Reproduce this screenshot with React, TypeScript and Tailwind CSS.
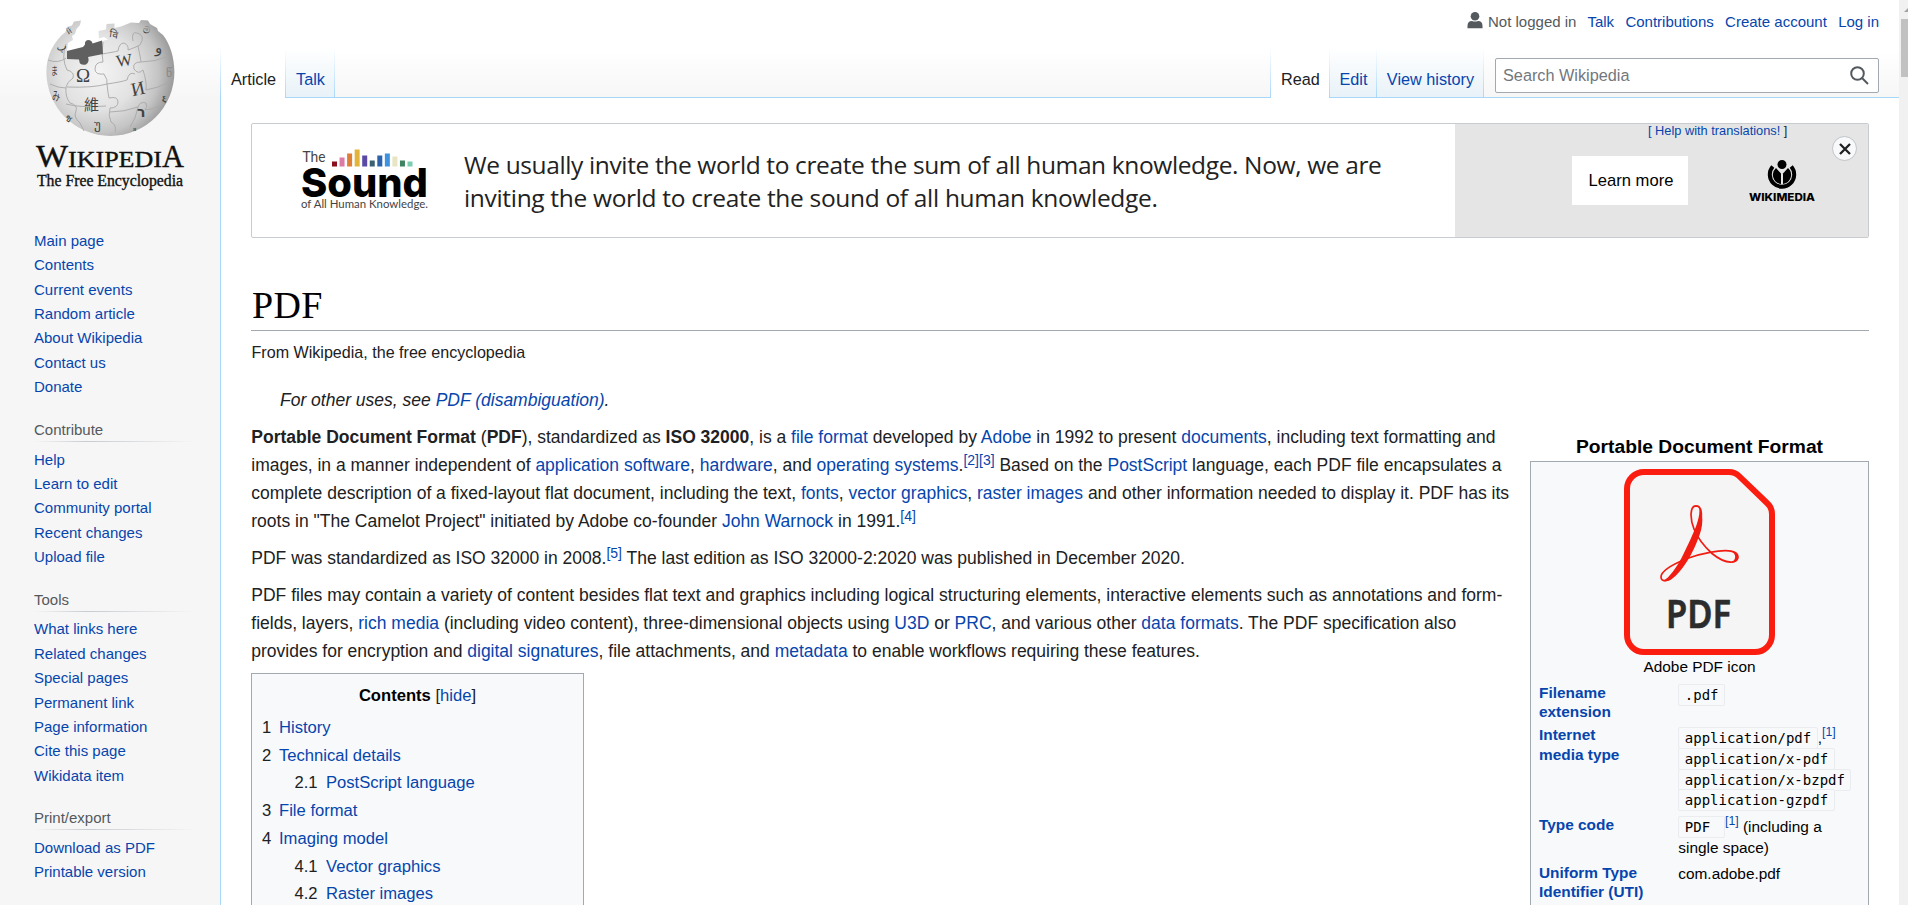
import type { ReactNode } from "react";

const A = ({ children }: { children: ReactNode }) => (
  <a href="#" className="text-[#0645ad]">{children}</a>
);

const Ref = ({ children }: { children: ReactNode }) => (
  <sup className="relative top-[-6px] align-baseline text-[14px] leading-none"><A>{children}</A></sup>
);

const portals = [
  { title: "Contribute", items: ["Help", "Learn to edit", "Community portal", "Recent changes", "Upload file"] },
  { title: "Tools", items: ["What links here", "Related changes", "Special pages", "Permanent link", "Page information", "Cite this page", "Wikidata item"] },
  { title: "Print/export", items: ["Download as PDF", "Printable version"] },
];

const mainLinks = ["Main page", "Contents", "Current events", "Random article", "About Wikipedia", "Contact us", "Donate"];

const contents = [
  { n: "1", t: "History", sub: false },
  { n: "2", t: "Technical details", sub: false },
  { n: "2.1", t: "PostScript language", sub: true },
  { n: "3", t: "File format", sub: false },
  { n: "4", t: "Imaging model", sub: false },
  { n: "4.1", t: "Vector graphics", sub: true },
  { n: "4.2", t: "Raster images", sub: true },
];

const bars: [number, string][] = [
  [5, "#8a0f1e"], [9, "#dc7ba6"], [13, "#df7f35"], [17, "#e2b53a"], [11, "#5a4aa5"], [6, "#3c6073"],
  [11, "#2b62ad"], [13, "#3e93e0"], [10, "#e8e5c4"], [6, "#3f8361"], [5, "#7ccdb0"],
];

function WikipediaLogo() {
  return (
    <svg width="220" height="200" viewBox="0 0 220 200" className="block">
      <defs>
        <radialGradient id="globe" gradientUnits="userSpaceOnUse" cx="98" cy="72" r="84">
          <stop offset="0" stopColor="#f4f4f4" />
          <stop offset="0.45" stopColor="#e2e2e2" />
          <stop offset="0.72" stopColor="#c4c4c4" />
          <stop offset="1" stopColor="#858585" />
        </radialGradient>
      </defs>
      <path
        d="M46.400 72 C46.500 55 54 41 65.500 32 L67 27 L72 25.500 L74 21.500 L81 20.500 L80 25 L76.500 29 L75 34 L72 36 L73 40 L68 43 L67 51 L84 47 L102 41 L108 39.500 L104 37 L99 38.500 L98.500 31 L106 29.500 L106.500 24 L114.500 23.500 L114.500 28 L121 26.500 L131 22.500 L139 23 L141 20 L148 20.500 L150 24 L157 28 L158 31 L163 35 C170 44 174.300 57 174.400 72 A64 64 0 0 1 46.400 72 Z"
        fill="url(#globe)"
      />
      <g fill="none" stroke="#a8a8a8" strokeWidth="0.900">
        <path d="M48 60 q10 4 18 -2 M66 44 q-5 14 1 26 q8 2 6 8 q-6 4 -7 9 q-1 10 4 16 q8 2 6 8 q-3 6 4 12 l4 8" />
        <path d="M103 42 q-2 12 0 20 q-8 0 -8 7 q0 6 9 5 q4 6 3 10 q-14 4 -40 3 M107 84 q1 10 2 14 q9 -2 9 4 q0 6 -8 6 q-2 8 1 14 q6 3 4 10" />
        <path d="M102 54 q12 -2 16 -3 q1 -8 6 -8 q5 2 4 7 q6 -2 12 -5 q6 -10 -3 -12 q-6 -2 -4 8 M138 46 q3 14 3 16 q-9 0 -7 7 q4 6 9 1 q4 12 3 20" />
        <path d="M107 84 q14 -2 20 -4 q2 -9 8 -6 M141 62 q14 0 28 -6 M146 90 q12 -2 24 -8 M110 112 q14 0 28 -5 q2 -6 8 -4 q2 4 -1 7 q8 0 18 -6 M66 104 q14 4 40 2 M50 84 q8 4 16 4 M138 107 q-2 12 -8 20" />
      </g>
      <path d="M67 51 L83 47 L85 44.500 Q84.500 40.500 88 40 Q92 40 92.500 43.500 L102 40.500 L103 54 L88 57 Q90 62 86 64.500 Q80 65.500 79.500 62 L79 59.500 L67 59 Z" fill="#606060" />
      <g fill="#424242" fontFamily="'Liberation Serif', serif">
        <text x="76" y="82" fontSize="19">Ω</text>
        <text x="116" y="66" fontSize="17" transform="rotate(-8 124 60)">W</text>
        <text x="131" y="95" fontSize="19" transform="rotate(-12 138 88)">И</text>
        <text x="84" y="110" fontSize="15" fontFamily="'Noto Sans CJK TC', sans-serif">維</text>
        <text x="137" y="117" fontSize="14" fontWeight="bold" fontFamily="'DejaVu Sans', sans-serif">ר</text>
        <text x="110" y="38" fontSize="10" transform="rotate(8 114 34)">वि</text>
        <text x="155" y="53" fontSize="15" fontFamily="'DejaVu Sans', sans-serif">و</text>
        <text x="143" y="34" fontSize="10" transform="rotate(20 147 31)">ම</text>
        <text x="56" y="50" fontSize="11" transform="rotate(-10 60 46)">پ</text>
        <text x="51" y="75" fontSize="11" fontFamily="'Noto Sans CJK JP', sans-serif" textLength="7" lengthAdjust="spacingAndGlyphs">ま</text>
        <text x="52" y="101" fontSize="12" fontFamily="'Noto Sans CJK JP', sans-serif" textLength="8" lengthAdjust="spacingAndGlyphs">み</text>
        <text x="94" y="129" fontSize="13">უ</text>
        <text x="66" y="122" fontSize="10" transform="rotate(35 70 118)">ช</text>
        <text x="166" y="77" fontSize="12" fill="#888">წ</text>
        <text x="162" y="102" fontSize="9" fontWeight="bold">ξ</text>
        <text x="66" y="34" fontSize="9" transform="rotate(-30 68 30)">й</text>
        <text x="133" y="131" fontSize="7">я</text>
      </g>
      <g fill="#111" fontFamily="'Liberation Serif', serif" stroke="#111" strokeWidth="0.350">
        <text x="36" y="167" fontSize="31" textLength="32" lengthAdjust="spacingAndGlyphs">W</text>
        <text x="68" y="167" fontSize="24" textLength="94" lengthAdjust="spacingAndGlyphs">IKIPEDI</text>
        <text x="162" y="167" fontSize="31" textLength="22" lengthAdjust="spacingAndGlyphs">A</text>
        <text x="37" y="185.500" fontSize="16" textLength="146" lengthAdjust="spacingAndGlyphs">The Free Encyclopedia</text>
      </g>
    </svg>
  );
}

function SoundLogo() {
  return (
    <svg width="130" height="64" viewBox="0 0 130 64" className="block">
      <text x="1.500" y="13.500" fontFamily="Lato, sans-serif" fontWeight="400" fontSize="15" fill="#444" textLength="23" lengthAdjust="spacingAndGlyphs">The</text>
      {bars.map(([h, c], i) => (
        <rect key={c} x={31 + i * 7.55} y={18.5 - h} width="5" height={h} fill={c} />
      ))}
      <text x="0" y="49" fontFamily="Inter, sans-serif" fontWeight="800" fontSize="40" fill="#000" textLength="127" lengthAdjust="spacingAndGlyphs">Sound</text>
      <text x="0" y="60" fontFamily="Lato, sans-serif" fontWeight="400" fontSize="10.500" fill="#444" textLength="127" lengthAdjust="spacingAndGlyphs">of All Human Knowledge.</text>
    </svg>
  );
}

function WikimediaLogo() {
  return (
    <svg width="66" height="43" viewBox="0 0 66 43" className="block">
      <circle cx="33" cy="4.500" r="4.500" />
      <path d="M23.800 6.500 A12.200 12.200 0 1 0 42.200 6.500" fill="none" stroke="#000" strokeWidth="4" />
      <path d="M27 8 L32 13.500 V24 A9.200 9.200 0 0 1 27 8 Z" />
      <path d="M39 8 L34 13.500 V24 A9.200 9.200 0 0 0 39 8 Z" />
      <text x="0" y="41" fontFamily="Inter, sans-serif" fontWeight="800" fontSize="10.500" textLength="66" lengthAdjust="spacingAndGlyphs">WIKIMEDIA</text>
    </svg>
  );
}

function PdfIcon() {
  return (
    <svg width="151" height="186" viewBox="0 0 151 186" className="block">
      <path d="M20 3 H105 Q111 3 115 7 L143 34 Q148 38.500 148 45 V166 A17 17 0 0 1 131 183 H20 A17 17 0 0 1 3 166 V20 A17 17 0 0 1 20 3 Z" fill="#f5f5f5" stroke="#fb1d10" strokeWidth="6" />
      <g fill="none" stroke="#f01c12" strokeWidth="1.700">
        <path d="M72 36.800 C65.500 37 66 50 70 60 C74 70 82 79 88 84.500 C96 91 103 93.500 108 93 C115.500 92 116 84 108 82.300 C97 80 75 85 63 89.500 C52 94 37 101 37 108 C37 113 44 113 49 107 C58 96 68 77 74 60 C79 48 78.500 37 72 36.800 Z" />
      </g>
      <g fill="#f01c12">
        <path d="M75 37.500 C80.500 47 78.500 60 74 70 C69 84 60 99 52 106.500 C47 111.500 43 113 39 112 C46 108 52 99 57.500 89 C64 76 69.500 64 72.500 56 C75 48 76 44 75 37.500 Z" />
        <path d="M106 81.500 C117 83.500 117.500 93 107 94 C112 91 113.500 85 106 81.500 Z" />
      </g>
      <text x="42" y="159" fontFamily="'Noto Sans', sans-serif" fontWeight="600" fontSize="39.500" fill="#2c2c2c" stroke="#2c2c2c" strokeWidth="0.600" textLength="65" lengthAdjust="spacingAndGlyphs">PDF</text>
    </svg>
  );
}

function Tab({ label, width, selected = false }: { label: string; width: string; selected?: boolean }) {
  return (
    <div className={`flex shrink-0 ${width}`}>
      <div
        className={`flex flex-1 justify-center pt-[22px] pl-px text-[16.25px] leading-[18px] ${
          selected ? "bg-white text-[#202122]" : "border-b border-[#a7d7f9] bg-linear-to-b from-white to-[#e8f2f8] text-[#0645ad]"
        }`}
      >
        {label}
      </div>
      <div className="w-px bg-linear-to-b from-white to-[#a7d7f9]" />
    </div>
  );
}

function Code({ children }: { children: ReactNode }) {
  return (
    <code className="rounded-[2px] border border-[#eaecf0] bg-[#f8f9fa] px-[5.500px] py-[2px] font-['DejaVu_Sans_Mono',monospace] text-[14px] text-black">
      {children}
    </code>
  );
}

const InfoRef = () => (
  <sup className="relative top-[-7px] align-baseline text-[12.300px] leading-none"><A>[1]</A></sup>
);

export default function App() {
  return (
    <div className="flex h-[905px] w-[1908px] overflow-hidden bg-[#f6f6f6] font-['Liberation_Sans',Arial,sans-serif] text-[#202122]">
      <div className="flex h-full w-[1899px] bg-[linear-gradient(to_bottom,#ffffff_50px,#f6f6f6_100px)]">
        <aside className="h-full w-[220px] shrink-0 text-[15px] leading-[16.875px]">
          <WikipediaLogo />
          <ul className="mt-[29.200px] pl-[34px]">
            {mainLinks.map((t) => (
              <li key={t} className="h-[24.375px] py-[3.750px]"><A>{t}</A></li>
            ))}
          </ul>
          {portals.map((p) => (
            <nav key={p.title}>
              <h3 className="flex h-[41px] items-end pb-[2px] pl-[34px] text-[#54595d]">{p.title}</h3>
              <div className="ml-[34px] h-px w-[162px] bg-linear-to-r from-[#f6f6f6] via-[#c8ccd1] via-33% to-[#f6f6f6]" />
              <ul className="pt-[6px] pl-[34px]">
                {p.items.map((t) => (
                  <li key={t} className="h-[24.375px] py-[3.750px]"><A>{t}</A></li>
                ))}
              </ul>
            </nav>
          ))}
        </aside>

        <div className="flex w-px shrink-0 flex-col pt-[48px]">
          <div className="h-[50px] bg-linear-to-b from-white to-[#a7d7f9]" />
          <div className="flex-1 bg-[#a7d7f9]" />
        </div>

        <div className="flex min-w-0 flex-1 flex-col">
          <div className="flex h-[48px] shrink-0 items-start justify-end pt-[12px] pr-[20px] text-[15px] leading-[20px]">
            <svg width="16" height="17" viewBox="0 0 16 17" fill="#54595d" className="mr-[5px]">
              <ellipse cx="8" cy="4.300" rx="4.300" ry="4.300" />
              <path d="M0.500 16.200 V14 Q0.500 9 5 9 Q8 10.200 11 9 Q15.500 9 15.500 14 V16.200 Z" />
            </svg>
            <span className="mr-[11px] text-[#54595d]">Not logged in</span>
            <div className="flex gap-[11.300px]"><A>Talk</A><A>Contributions</A><A>Create account</A><A>Log in</A></div>
          </div>
          <div className="flex h-[50px] shrink-0">
            <Tab label="Article" width="w-[65px]" selected />
            <Tab label="Talk" width="w-[49px]" />
            <div className="flex-1 border-b border-[#a7d7f9]" />
            <div className="w-px bg-linear-to-b from-white to-[#a7d7f9]" />
            <Tab label="Read" width="w-[59px]" selected />
            <Tab label="Edit" width="w-[47px]" />
            <Tab label="View history" width="w-[107px]" />
            <div className="w-[415px] border-b border-[#a7d7f9] pt-[10px] pl-[11px]">
              <div className="flex h-[35px] w-[384px] items-center justify-between rounded-[2px] border border-[#a2a9b1] bg-white pr-[9px] pl-[7px]">
                <span className="text-[16.250px] text-[#72777d]">Search Wikipedia</span>
                <svg width="19" height="19" viewBox="0 0 19 19" fill="none" stroke="#54595d" strokeWidth="2">
                  <circle cx="7.500" cy="7.500" r="6.300" />
                  <path d="M12 12 L18 18" />
                </svg>
              </div>
            </div>
          </div>

          <main className="min-h-0 flex-1 overflow-hidden bg-white px-[30px] pt-[25px]">
            <section className="relative flex h-[115px] overflow-hidden rounded-[2px] border border-[#c8ccd1]">
              <div className="w-[212px] pt-[24px] pl-[48.500px]"><SoundLogo /></div>
              <p className="w-[991px] pt-[23.500px] text-[24.500px] leading-[33.300px] tracking-[-0.370px] whitespace-nowrap text-[#222] font-['Open_Sans',sans-serif]">
                We usually invite the world to create the sum of all human knowledge. Now, we are<br />
                <span className="tracking-[-0.320px]">inviting the world to create the sound of all human knowledge.</span>
              </p>
              <div className="flex flex-1 flex-col bg-[#e5e5e5]">
                <div className="h-[15px] pl-[193px] text-[12.800px] leading-[13px] whitespace-pre text-[#202122]">
                  <A>[ Help with translations!</A> ]
                </div>
                <div className="flex pl-[117px]">
                  <button className="mt-[17px] h-[49px] w-[116px] bg-white pt-[2px] pl-[2px] text-[16.600px] text-black">Learn more</button>
                  <div className="mt-[21px] ml-[61px]"><WikimediaLogo /></div>
                </div>
              </div>
              <button className="absolute top-[12px] right-[11px] flex size-[25px] items-center justify-center rounded-full border border-[#c0c4c8] bg-[#f8f9fa]">
                <svg width="12" height="12" viewBox="0 0 12 12" stroke="#202122" strokeWidth="2.300">
                  <path d="M1 1 L11 11 M11 1 L1 11" />
                </svg>
              </button>
            </section>

            <h1 className="flex h-[93px] items-end border-b border-[#a2a9b1] pb-[2px] pl-px text-[38px] leading-[46px] tracking-[0.300px] text-black font-['Liberation_Serif',serif]">PDF</h1>
            <p className="mt-[8px] pl-[0.500px] text-[16.100px] leading-[26px]">From Wikipedia, the free encyclopedia</p>
            <p className="mt-[21px] pl-[29px] text-[17.500px] leading-[28px] italic">For other uses, see <A>PDF (disambiguation)</A>.</p>

            <div className="mt-[9px] flex justify-between">
              <article className="w-[1262px] shrink-0 text-[17.500px] leading-[28px] whitespace-nowrap">
                <p className="pl-[0.300px]">
                  <b>Portable Document Format</b> (<b>PDF</b>), standardized as <b>ISO 32000</b>, is a <A>file format</A> developed by <A>Adobe</A> in 1992 to present <A>documents</A>, including text formatting and<br />
                  images, in a manner independent of <A>application software</A>, <A>hardware</A>, and <A>operating systems</A>.<Ref>[2][3]</Ref> Based on the <A>PostScript</A> language, each PDF file encapsulates a<br />
                  complete description of a fixed-layout flat document, including the text, <A>fonts</A>, <A>vector graphics</A>, <A>raster images</A> and other information needed to display it. PDF has its<br />
                  roots in "The Camelot Project" initiated by Adobe co-founder <A>John Warnock</A> in 1991.<Ref>[4]</Ref>
                </p>
                <p className="mt-[9px] pl-[0.300px]">
                  PDF was standardized as ISO 32000 in 2008.<Ref>[5]</Ref> The last edition as ISO 32000-2:2020 was published in December 2020.
                </p>
                <p className="mt-[9px] pl-[0.300px]">
                  PDF files may contain a variety of content besides flat text and graphics including logical structuring elements, interactive elements such as annotations and form-<br />
                  fields, layers, <A>rich media</A> (including video content), three-dimensional objects using <A>U3D</A> or <A>PRC</A>, and various other <A>data formats</A>. The PDF specification also<br />
                  provides for encryption and <A>digital signatures</A>, file attachments, and <A>metadata</A> to enable workflows requiring these features.
                </p>
                <nav className="mt-[8px] h-[260px] w-[333px] border border-[#a2a9b1] bg-[#f8f9fa] px-[10px] pt-[9px] text-[16.625px] leading-[26.600px]">
                  <h2 className="text-center"><b className="text-black">Contents</b> [<A>hide</A>]</h2>
                  <ul className="pt-[5.500px]">
                    {contents.map((c) => (
                      <li key={c.n} className={c.sub ? "h-[27.700px] pl-[32.500px]" : "h-[27.700px]"}>
                        <span className={c.sub ? "inline-block w-[31.500px]" : "inline-block w-[17px]"}>{c.n}</span>
                        <A>{c.t}</A>
                      </li>
                    ))}
                  </ul>
                </nav>
              </article>

              <aside className="w-[339px] shrink-0 pt-[10.500px] text-[15.400px] text-black">
                <h2 className="text-center text-[19.250px] leading-[26px] font-bold">Portable Document Format</h2>
                <div className="mt-[1.500px] h-[460px] border border-[#a2a9b1] bg-[#f8f9fa] pt-[7px]">
                  <div className="flex justify-center"><PdfIcon /></div>
                  <p className="mt-[1px] text-center leading-[21px]">Adobe PDF icon</p>
                  <dl className="mt-[6px] grid grid-cols-[139.300px_1fr] grid-rows-[42.300px_90px_47.700px_60px] pl-[8px] leading-[19.250px]">
                    <dt className="font-bold"><A>Filename<br />extension</A></dt>
                    <dd className="pt-[2px] leading-[20.700px]"><Code>.pdf</Code></dd>
                    <dt className="font-bold"><A>Internet<br />media type</A></dt>
                    <dd className="pt-[2.800px] leading-[20.700px] whitespace-nowrap">
                      <div><Code>application/pdf</Code><span>,</span><InfoRef /></div>
                      <div><Code>application/x-pdf</Code></div>
                      <div><Code>application/x-bzpdf</Code></div>
                      <div><Code>application-gzpdf</Code></div>
                    </dd>
                    <dt className="font-bold"><A>Type code</A></dt>
                    <dd className="pt-[1.800px] leading-[20.700px] whitespace-nowrap">
                      <Code>PDF&nbsp;</Code><InfoRef /> (including a<br />single space)
                    </dd>
                    <dt className="font-bold"><A>Uniform Type<br />Identifier (UTI)</A></dt>
                    <dd className="leading-[21px]">com.adobe.pdf</dd>
                  </dl>
                </div>
              </aside>
            </div>
          </main>
        </div>
      </div>

      <div className="flex h-full w-[9px] flex-col items-end bg-[#f1f1f1]">
        <svg width="4" height="19" viewBox="0 0 4 19" className="block"><path d="M0 12 L4 8 V12 Z" fill="#a3a3a3" /></svg>
        <div className="h-[58px] w-[7px] bg-[#c1c1c1]" />
      </div>
    </div>
  );
}
